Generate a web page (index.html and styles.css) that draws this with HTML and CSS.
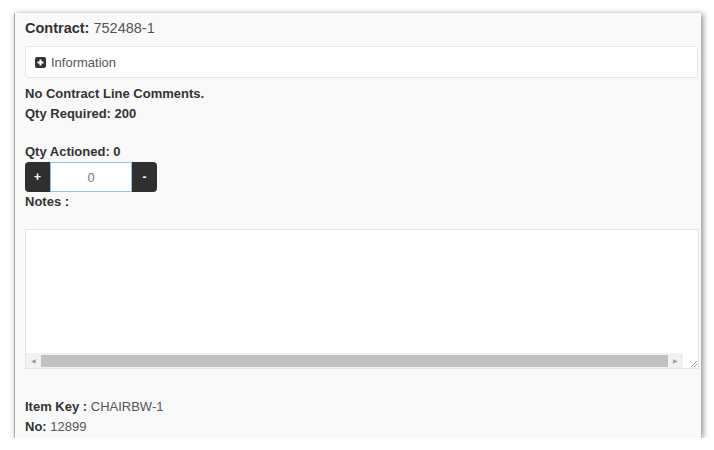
FILE: index.html
```html
<!DOCTYPE html>
<html lang="en">
<head>
    <meta charset="UTF-8">
    <meta name="viewport" content="width=device-width, initial-scale=1.0">
    <title>Contract Line</title>
    <link rel="stylesheet" href="styles.css">
</head>
<body>
    <div class="panel">
        <div class="contract"><b>Contract:</b> 752488-1</div>

        <div class="info-box">
            <svg class="info-icon" width="11" height="11" viewBox="0 0 11 11">
                <rect x="0" y="0" width="11" height="11" rx="2" fill="#333"/>
                <path d="M5.5 2.5v6M2.5 5.5h6" stroke="#fff" stroke-width="2"/>
            </svg>
            <span>Information</span>
        </div>

        <div class="line bold first">No Contract Line Comments.</div>
        <div class="line bold">Qty Required: 200</div>

        <div class="line bold actioned">Qty Actioned: 0</div>
        <div class="qty-group">
            <button class="qty-btn">+</button>
            <input class="qty-input" type="text" value="0">
            <button class="qty-btn">-</button>
        </div>
        <div class="line bold">Notes :</div>

        <div class="notes-box">
            <div class="notes-area"></div>
            <div class="hscroll">
                <div class="hscroll-arrow">&#9664;</div>
                <div class="hscroll-thumb"></div>
                <div class="hscroll-arrow">&#9654;</div>
                <div class="resize-grip">
                    <svg width="10" height="10" viewBox="0 0 10 10">
                        <path d="M9 3L3 9M9 6L6 9" stroke="#999" stroke-width="1"/>
                    </svg>
                </div>
            </div>
        </div>

        <div class="line item-key"><b>Item Key :</b> CHAIRBW-1</div>
        <div class="line"><b>No:</b> 12899</div>
    </div>
</body>
</html>
```

FILE: styles.css
```css
/* General styles */
body {
    font-family: "Liberation Sans", Arial, sans-serif;
    margin: 0;
    padding: 13px 0 0 14px;
    background-color: #ffffff;
    color: #333333;
}

.panel {
    width: 676px;
    height: 420px;
    padding: 5px 0 0 10px;
    background-color: #f9f9f9;
    border-left: 1px solid #a8a8a8;
    box-shadow: 2px 1px 6px rgba(0, 0, 0, 0.45);
}

.contract {
    font-size: 14.5px;
    line-height: 20px;
    color: #555555;
}

.contract b {
    color: #333333;
}

/* Information box */
.info-box {
    display: flex;
    align-items: center;
    gap: 5px;
    height: 30px;
    margin-top: 8px;
    padding-left: 9px;
    width: 662px;
    background-color: #ffffff;
    border: 1px solid #e6e6e6;
    border-radius: 4px;
    font-size: 13px;
    color: #555555;
}

.line {
    font-size: 13px;
    line-height: 20px;
    color: #555555;
}

.line b,
.bold {
    font-weight: bold;
    color: #333333;
}

.first {
    margin-top: 6px;
}

.actioned {
    margin-top: 18px;
}

/* Qty input group */
.qty-group {
    display: flex;
    width: 132px;
    height: 30px;
}

.qty-btn {
    width: 25px;
    padding: 0;
    border: none;
    background-color: #2f2f2f;
    color: #ffffff;
    font-family: inherit;
    font-size: 12px;
    font-weight: bold;
}

.qty-btn:first-child {
    border-radius: 4px 0 0 4px;
}

.qty-btn:last-child {
    border-radius: 0 4px 4px 0;
}

.qty-input {
    width: 82px;
    box-sizing: border-box;
    margin: 0;
    padding: 0;
    border: 1px solid #8fc3ee;
    text-align: center;
    font-family: inherit;
    font-size: 13px;
    color: #777777;
    outline: none;
}

/* Notes box with horizontal scrollbar */
.notes-box {
    display: flex;
    flex-direction: column;
    width: 672px;
    height: 138px;
    margin-top: 17px;
    background-color: #ffffff;
    border: 1px solid #e4e4e4;
}

.notes-area {
    flex: 1;
}

.hscroll {
    display: flex;
    align-items: center;
    height: 15px;
    background-color: #f1f1f1;
}

.hscroll-arrow {
    width: 15px;
    font-size: 6px;
    color: #a0a0a0;
    text-align: center;
}

.hscroll-thumb {
    flex: 1;
    height: 12px;
    background-color: #c1c1c1;
}

.resize-grip {
    width: 15px;
    height: 15px;
    display: flex;
    align-items: flex-end;
    justify-content: flex-end;
    background-color: #ffffff;
}

.item-key {
    margin-top: 28px;
}
```
